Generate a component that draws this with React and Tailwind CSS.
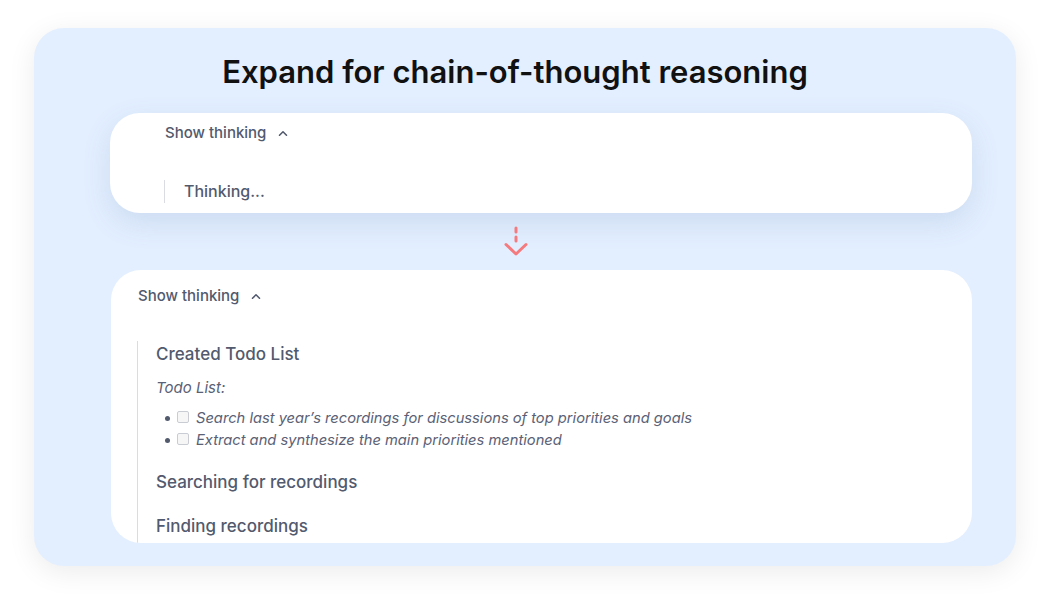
import React from "react";

const FONT = { fontFamily: "Inter, 'Open Sans', sans-serif" };

function ChevronUp() {
  return (
    <svg width="10" height="7" viewBox="0 0 10 7" fill="none" className="ml-[12px]">
      <path d="M1.5 5.2 L5 1.8 L8.5 5.2" stroke="#525a6e" strokeWidth="1.6" strokeLinecap="round" strokeLinejoin="round" />
    </svg>
  );
}

function ShowThinking() {
  return (
    <div className="flex items-center text-[15px] leading-[20px] font-medium text-[#525a6e]">
      <span>Show thinking</span>
      <ChevronUp />
    </div>
  );
}

function DownArrow() {
  return (
    <svg width="26" height="32" viewBox="0 0 26 32" fill="none">
      <path d="M13 2 L13 15" stroke="#f47a7e" strokeWidth="3" strokeLinecap="round" strokeDasharray="4 5" />
      <path d="M3 18.5 L13 28 L23 18.5" stroke="#f47a7e" strokeWidth="3" strokeLinecap="round" strokeLinejoin="round" />
    </svg>
  );
}

function TodoItem({ children }) {
  return (
    <li className="flex items-center h-[22px]">
      <span className="w-[5px] h-[5px] rounded-full bg-[#525a6e] ml-[9px] mr-[7px]" />
      <span className="w-[12px] h-[12px] rounded-[2px] border border-[#c9cdd3] bg-[#f6f6f7] mr-[7px] -mt-[3px]" />
      <span className="italic text-[14.7px] text-[#5a6175]">{children}</span>
    </li>
  );
}

export default function App() {
  return (
    <div className="w-[1050px] h-[606px] bg-white pt-[28px] pl-[34px]" style={FONT}>
      <div className="w-[982px] h-[538px] rounded-[30px] bg-[#e3efff] shadow-[0_6px_28px_rgba(0,0,0,0.08)] pl-[76px] pr-[44px] pt-[24px] overflow-hidden">
        <h1 className="text-center text-[31px] leading-[40px] font-semibold text-[#111] -ml-[76px] -mr-[44px] pr-[20px]">
          Expand for chain-of-thought reasoning
        </h1>

        {/* collapsed state */}
        <div className="mt-[21px] h-[100px] bg-white rounded-[30px] shadow-[0_10px_28px_rgba(90,120,170,0.16)] pl-[54px] pt-[10px]">
          <div className="pl-[1px]">
            <ShowThinking />
          </div>
          <div className="mt-[37px] border-l border-[#d9dde3] pl-[19px] text-[16px] leading-[23px] font-medium text-[#525a6e]">
            Thinking...
          </div>
        </div>

        <div className="flex justify-center h-[57px] items-center pr-[50px]">
          <DownArrow />
        </div>

        {/* expanded state */}
        <div className="h-[273px] bg-white rounded-[30px] overflow-hidden pl-[26px] pt-[16px] ml-[1px]">
          <div className="pl-[1px]">
            <ShowThinking />
          </div>
          <div className="mt-[35px] h-[300px] border-l border-[#d9dde3] pl-[18px] pt-[1px] text-[#525a6e]">
            <div className="text-[17px] leading-[24px] font-medium">Created Todo List</div>
            <div className="mt-[11px] italic text-[15px] leading-[22px] text-[#5a6175]">Todo List:</div>
            <ul className="mt-[8px]">
              <TodoItem>Search last year’s recordings for discussions of top priorities and goals</TodoItem>
              <TodoItem>Extract and synthesize the main priorities mentioned</TodoItem>
            </ul>
            <div className="mt-[19px] text-[17px] leading-[24px] font-medium">Searching for recordings</div>
            <div className="mt-[20px] text-[17px] leading-[24px] font-medium">Finding recordings</div>
          </div>
        </div>
      </div>
    </div>
  );
}
